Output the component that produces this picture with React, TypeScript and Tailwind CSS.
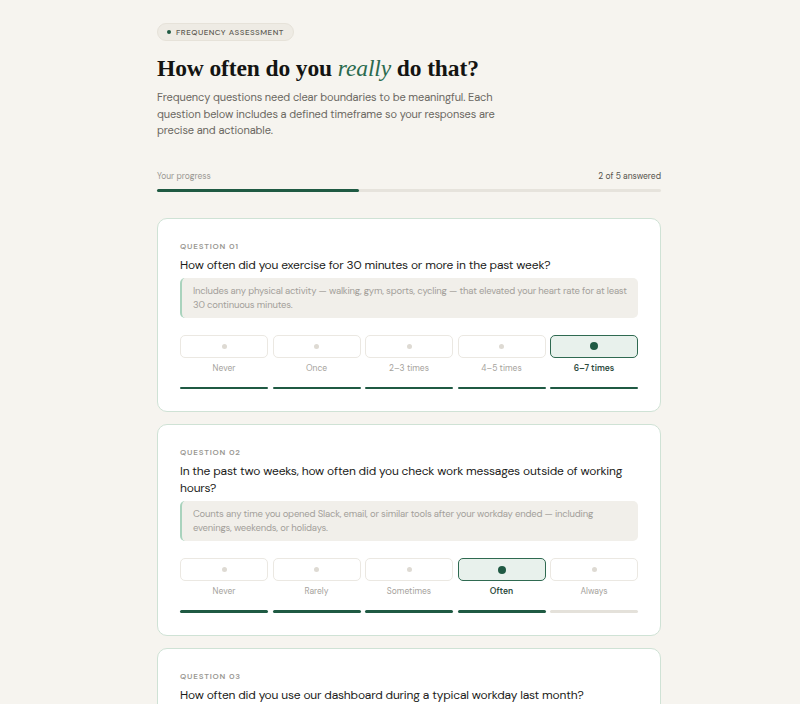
import React from "react";

type Q = {
  n: string;
  q: string;
  hint: string;
  options: string[];
  selected: number | null;
};

const qs: Q[] = [
  {
    n: "01",
    q: "How often did you exercise for 30 minutes or more in the past week?",
    hint: "Includes any physical activity — walking, gym, sports, cycling — that elevated your heart rate for at least 30 continuous minutes.",
    options: ["Never", "Once", "2–3 times", "4–5 times", "6–7 times"],
    selected: 4,
  },
  {
    n: "02",
    q: "In the past two weeks, how often did you check work messages outside of working hours?",
    hint: "Counts any time you opened Slack, email, or similar tools after your workday ended — including evenings, weekends, or holidays.",
    options: ["Never", "Rarely", "Sometimes", "Often", "Always"],
    selected: 3,
  },
  {
    n: "03",
    q: "How often did you use our dashboard during a typical workday last month?",
    hint: "A session counts as opening the dashboard and viewing at least one report or chart.",
    options: ["Never", "1–2 times", "3–5 times", "6–10 times", "10+ times"],
    selected: null,
  },
];

function Card({ item }: { item: Q }) {
  return (
    <div className="rounded-[10px] border border-[#cfe2d5] bg-white px-[22px] pt-[22px] pb-[22px]">
      <div className="text-[8px] leading-[10px] font-semibold tracking-[0.1em] text-[#9a9893]">
        QUESTION {item.n}
      </div>
      <div className="mt-[6px] text-[12px] leading-[17px] tracking-[-0.015em] text-[#1c1c1a]">{item.q}</div>
      <div className="mt-[4px] rounded-[5px] border-l-2 border-[#a9d3bd] bg-[#f1efea] px-[11px] py-[6px] text-[9.5px] leading-[14px] tracking-[-0.02em] text-[#a3a09a]">
        {item.hint}
      </div>
      <div className="mt-[17px] grid grid-cols-5 gap-[4.5px]">
        {item.options.map((o, i) => {
          const sel = item.selected === i;
          const filled = item.selected !== null && i <= item.selected;
          return (
            <div key={o} className="flex flex-col items-stretch">
              <div
                className={
                  sel
                    ? "flex h-[23px] items-center justify-center rounded-[5px] border border-[#2f6a51] bg-[#e8f1ec]"
                    : "flex h-[23px] items-center justify-center rounded-[5px] border border-[#ebe8e2] bg-white"
                }
              >
                <span
                  className={
                    sel
                      ? "block h-[8px] w-[8px] rounded-full bg-[#1f5a43]"
                      : "block h-[5px] w-[5px] rounded-full bg-[#dedad3]"
                  }
                />
              </div>
              <div
                className={
                  sel
                    ? "mt-[5px] text-center text-[8.5px] leading-[12px] font-semibold text-[#2c4a3d]"
                    : "mt-[5px] text-center text-[8.5px] leading-[12px] text-[#a5a29c]"
                }
              >
                {o}
              </div>
              <div
                className={
                  filled
                    ? "mt-[12px] h-[2.5px] rounded-full bg-[#1f5a43]"
                    : "mt-[12px] h-[2.5px] rounded-full bg-[#e4e1da]"
                }
              />
            </div>
          );
        })}
      </div>
    </div>
  );
}

export default function App() {
  return (
    <div
      className="min-h-[704px] w-full bg-[#f6f4ef] pl-[157px] pt-[23px]"
      style={{ fontFamily: "'DM Sans', Inter, 'Noto Sans', sans-serif" }}
    >
      <div className="w-[504px]">
        <div className="flex">
          <div className="flex h-[18px] items-center gap-[5px] rounded-full border border-[#e6e2d9] bg-[#eeebe4] px-[9px] text-[8px] leading-[10px] font-medium tracking-[0.06em] text-[#5e5b55]">
            <span className="block h-[4px] w-[4px] rounded-full bg-[#1f5a43]" />
            FREQUENCY ASSESSMENT
          </div>
        </div>
        <h1
          className="mt-[12px] text-[23.5px] leading-[30px] font-bold tracking-[-0.005em] text-[#141412]"
          style={{ fontFamily: "'Liberation Serif', 'DejaVu Serif', serif" }}
        >
          How often do you <em className="font-normal text-[#2a6a4e]">really</em> do that?
        </h1>
        <p className="mt-[6px] w-[345px] text-[11px] leading-[16.5px] tracking-[-0.01em] text-[#6b6862]">
          Frequency questions need clear boundaries to be meaningful. Each question below includes a defined timeframe so your responses are precise and actionable.
        </p>
        <div className="mt-[32px] flex items-center justify-between text-[8.5px] leading-[12px]">
          <span className="text-[#9a9893]">Your progress</span>
          <span className="text-[#55524c]">2 of 5 answered</span>
        </div>
        <div className="mt-[6px] h-[3px] w-full rounded-full bg-[#e6e3dc]">
          <div className="h-[3px] rounded-full bg-[#1f5a43]" style={{ width: "40%" }} />
        </div>
        <div className="mt-[26px] flex flex-col gap-[12px] pb-[40px]">
          {qs.map((q) => (
            <Card key={q.n} item={q} />
          ))}
        </div>
      </div>
    </div>
  );
}
